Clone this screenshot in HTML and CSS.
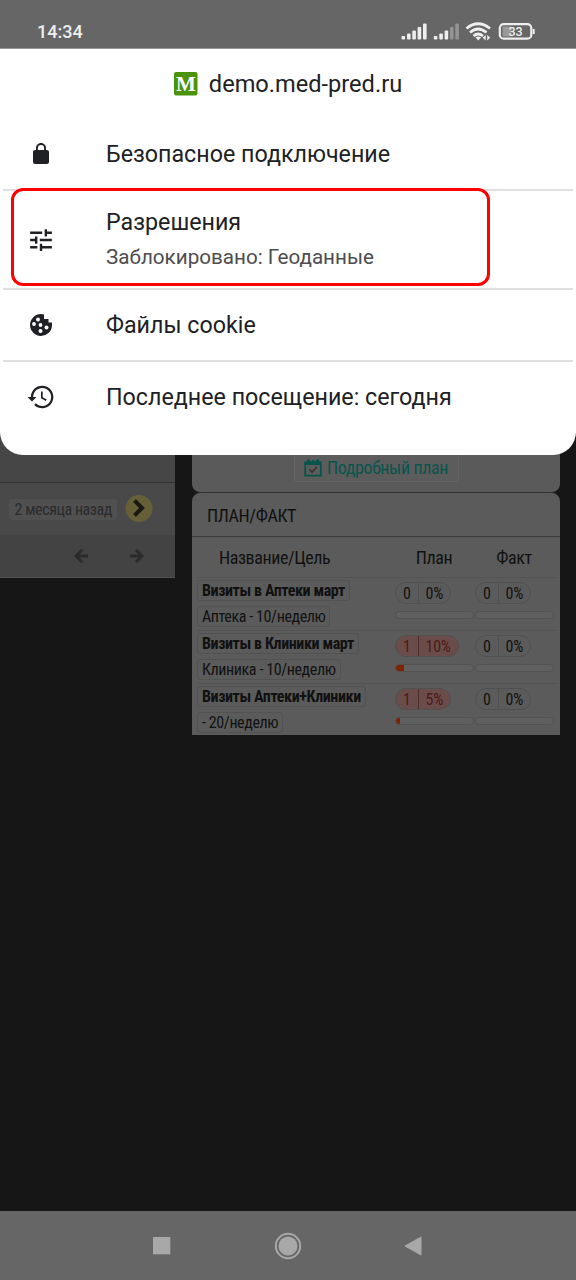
FILE: index.html
```html
<!DOCTYPE html>
<html lang="ru">
<head>
<meta charset="utf-8">
<title>demo.med-pred.ru</title>
<link rel="stylesheet" href="styles.css">
</head>
<body>
<div class="phone">
  <header class="status">
    <span class="clock">14:34</span>
    <svg class="signals" width="136" height="20" viewBox="0 0 136 20">
      <g fill="#eee">
        <rect x="1.5" y="15" width="3.6" height="3.5" rx="1"/><rect x="7" y="12.500" width="3.600" height="6" rx="1"/><rect x="12.300" y="9.500" width="3.600" height="9" rx="1"/><rect x="17.600" y="6" width="3.600" height="12.500" rx="1"/><rect x="23" y="2.500" width="3.600" height="16" rx="1"/>
        <rect x="33.800" y="15" width="3.600" height="3.500" rx="1"/><rect x="39.300" y="12.500" width="3.600" height="6" rx="1"/><rect x="44.600" y="9.500" width="3.600" height="9" rx="1"/>
      </g>
      <g fill="#949494"><rect x="50" y="6" width="3.600" height="12.500" rx="1"/><rect x="55.300" y="2.500" width="3.600" height="16" rx="1"/></g>
      <g fill="none" stroke="#eee" stroke-width="2.700"><path d="M66.500 7.500Q78 -2 90 7.500"/><path d="M70 11.500Q78 4.500 86.500 11.500"/><path d="M73.500 15Q78 11 83 15"/></g>
      <path d="M75.500 16.500L78.300 19.500L81 16.500Q78.300 14.500 75.500 16.500Z" fill="#eee"/>
      <path d="M85.700 14v5.500l-3-2.700M87.200 19.500v-5.500l3 2.700" fill="#eee"/>
      <rect x="99.800" y="3.200" width="31.500" height="14.500" rx="4" fill="none" stroke="#eee" stroke-width="2.200"/>
      <rect x="102.500" y="5.500" width="9" height="10" rx="1" fill="#999"/>
      <path d="M133.700 8v5" stroke="#eee" stroke-width="2"/>
      <text x="115.500" y="15" text-anchor="middle" class="battery">33</text>
    </svg>
  </header>

  <main class="page">
    <section class="aside">
      <div class="aside-top"></div>
      <div class="aside-row"><span class="ago">2 месяца назад</span>
        <svg class="next" width="28" height="28" viewBox="0 0 28 28"><circle cx="14" cy="13.500" r="13.500" fill="#666039"/><path d="M9.500 5.500L17 13L9.500 20.500" fill="none" stroke="#1b1a12" stroke-width="4"/></svg>
      </div>
      <div class="aside-nav">
        <svg width="14" height="14" viewBox="0 0 14 14"><path d="M8 1L2 7L8 13M2 7H14" /></svg>
        <svg width="14" height="14" viewBox="0 0 14 14"><path d="M6 1L12 7L6 13M12 7H0" /></svg>
      </div>
    </section>
    <section class="cards">
      <div class="card upper">
        <div class="plan-btn">
          <svg width="18" height="18" viewBox="0 0 18 18"><path d="M1.200 3.500H16.800V16.700H1.200Z" fill="none" stroke="#08554d" stroke-width="1.800"/><path d="M1 2.500H17V6H1ZM3 .5H6V4H3ZM12 .5H15V4H12ZM8 1H10V4H8Z" fill="#08554d"/><path d="M5.500 10.500L8 13L13 8" fill="none" stroke="#333" stroke-width="1.600"/></svg>
          <span>Подробный план</span>
        </div>
      </div>
      <div class="card fact">
        <h2>ПЛАН/ФАКТ</h2>
        <div class="head"><span class="c1">Название/Цель</span><span class="c2">План</span><span class="c3">Факт</span></div>
        <div class="row">
          <div class="names"><b>Визиты в Аптеки март</b><span>Аптека - 10/неделю</span></div>
          <div class="metric"><div class="pill"><i>0</i><i>0%</i></div><div class="bar"></div></div>
          <div class="metric"><div class="pill"><i>0</i><i>0%</i></div><div class="bar"></div></div>
        </div>
        <div class="row">
          <div class="names"><b>Визиты в Клиники март</b><span>Клиника - 10/неделю</span></div>
          <div class="metric"><div class="pill red"><i>1</i><i>10%</i></div><div class="bar"><div class="fill" style="width:10%"></div></div></div>
          <div class="metric"><div class="pill"><i>0</i><i>0%</i></div><div class="bar"></div></div>
        </div>
        <div class="row">
          <div class="names"><b>Визиты Аптеки+Клиники</b><span>- 20/неделю</span></div>
          <div class="metric"><div class="pill red"><i>1</i><i>5%</i></div><div class="bar"><div class="fill" style="width:5%"></div></div></div>
          <div class="metric"><div class="pill"><i>0</i><i>0%</i></div><div class="bar"></div></div>
        </div>
      </div>
    </section>

    <div class="sheet">
      <div class="site">
        <svg width="24" height="24" viewBox="0 0 24 24"><rect width="23.500" height="23.500" rx="2" fill="#4c930c"/><text x="11.800" y="18.500" text-anchor="middle" class="logo-letter">M</text></svg>
        <span>demo.med-pred.ru</span>
      </div>
      <div class="item secure">
        <svg width="24" height="24" viewBox="0 0 24 24"><path d="M18 8h-1V6c0-2.760-2.240-5-5-5S7 3.240 7 6v2H6c-1.100 0-2 .9-2 2v10c0 1.100.9 2 2 2h12c1.100 0 2-.9 2-2V10c0-1.100-.9-2-2-2zM8.900 8V6a3.100 3.100 0 0 1 6.200 0v2z"/></svg>
        <span>Безопасное подключение</span>
      </div>
      <div class="item perms">
        <svg width="29" height="29" viewBox="0 0 24 24"><path d="M3 17v2h6v-2H3zM3 5v2h10V5H3zm10 16v-2h8v-2h-8v-2h-2v6h2zM7 9v2H3v2h4v2h2V9H7zm14 4v-2H11v2h10zm-6-4h2V7h4V5h-4V3h-2v6z"/></svg>
        <div class="two"><span>Разрешения</span><small>Заблокировано: Геоданные</small></div>
        <div class="marker"></div>
      </div>
      <div class="item cookies">
        <svg width="24" height="24" viewBox="0 0 24 24"><path d="M12 1A11 11 0 1 0 23 12.500V9.500H19.500V6H15V1.500Z"/><g fill="#fff"><circle cx="9" cy="6.500" r="2"/><circle cx="5" cy="11" r="1.900"/><circle cx="11.500" cy="12" r="1.900"/><circle cx="17.500" cy="14.500" r="2"/><circle cx="11.500" cy="18" r="2"/></g></svg>
        <span>Файлы cookie</span>
      </div>
      <div class="item visit">
        <svg width="27" height="27" viewBox="0 0 24 24"><path d="M13 2a10 10 0 0 0-10 10H0l4 4 4-4H5a8 8 0 1 1 2.350 5.650L5.930 19.070A10 10 0 1 0 13 2zm-1 5v6l4.300 2.550.75-1.240-3.550-2.110V7z"/></svg>
        <span>Последнее посещение: сегодня</span>
      </div>
    </div>
  </main>

  <nav class="nav">
    <svg width="18" height="18"><rect width="17.300" height="17.300" fill="#a8a8a8"/></svg>
    <svg width="28" height="28"><circle cx="14" cy="14" r="12.200" fill="none" stroke="#a8a8a8" stroke-width="2"/><circle cx="14" cy="14" r="9.500" fill="#a8a8a8"/></svg>
    <svg width="18" height="20"><path d="M1 10L17 1V19Z" fill="#a8a8a8" stroke="#a8a8a8" stroke-linejoin="round"/></svg>
  </nav>
</div>
</body>
</html>
```
FILE: styles.css
```css
* { box-sizing: border-box; }
body { margin: 0; font-family: Roboto, sans-serif; background: #161616; }
svg { display: block; flex: none; }
.phone { width: 576px; height: 1280px; display: flex; flex-direction: column; overflow: hidden; }
.status { height: 48px; flex: none; background: #666; display: flex; justify-content: space-between; align-items: flex-start; padding: 21px 40px 0 37px; color: #eee; }
.clock { font-size: 18px; font-weight: 500; line-height: 22px; }
.battery { font-size: 12.500px; font-weight: 500; fill: #eee; }
.page { position: relative; flex: 1; display: flex; align-items: flex-start; background: #161616; font-family: "Roboto Condensed", Roboto, sans-serif; font-stretch: 75%; color: #111; }

.aside { width: 175px; height: 530px; margin-right: 17px; background: #434343; border-bottom: 1px solid #505050; }
.aside-top { height: 435px; border-bottom: 1px solid #333; background: #464646; }
.aside-row { height: 52px; background: #494949; display: flex; align-items: center; justify-content: flex-end; padding-right: 22px; gap: 8px; }
.ago { height: 21px; line-height: 21px; padding: 0 5px; font-size: 16px; letter-spacing: -.42px; color: #2b2b2b; background: #505050; border-radius: 3px; white-space: nowrap; }
.aside-nav { height: 41px; display: flex; justify-content: flex-end; align-items: center; gap: 42px; padding-right: 31px; }
.aside-nav path { fill: none; stroke: #2b2b2b; stroke-width: 3; }

.cards { width: 368px; }
.card { background: #5b5b5b; }
.upper { height: 444px; display: flex; flex-direction: column; justify-content: flex-end; align-items: center; padding-bottom: 10px; border-radius: 0 0 8px 8px; background: #5a5a5a; }
.plan-btn { width: 165px; height: 29px; display: flex; align-items: center; justify-content: center; gap: 5px; border: 1px solid #646464; border-radius: 3px; font-size: 18px; letter-spacing: -.4px; color: #08554d; background: #5c5c5c; white-space: nowrap; }
.fact { height: 243px; border-top: 1px solid #333; border-radius: 9px 9px 0 0; }
h2 { margin: 0; height: 44px; line-height: 45px; padding-left: 15px; font-size: 18px; letter-spacing: -.4px; font-weight: 400; border-bottom: 1px solid #3c3c3c; }
.head { height: 40px; display: grid; grid-template-columns: 202px 80px 80px; line-height: 41px; font-size: 18px; letter-spacing: -.42px; }
.c1 { padding-left: 27px; }
.c2 { text-align: center; }
.c3 { text-align: center; }
.row { height: 53px; margin: 0 2px 0 5px; padding-top: 2px; border-top: 1px solid #545454; display: flex; }
.names { width: 198px; flex: none; display: flex; flex-direction: column; align-items: flex-start; gap: 5px; }
.names b, .names span { height: 21px; line-height: 19px; padding: 0 4px; border: 1px solid #525252; border-radius: 3px; font-size: 16px; letter-spacing: -.4px; white-space: nowrap; }
.metric { width: 80px; flex: none; padding-top: 2px; }
.pill { height: 22px; width: max-content; display: flex; border: 1px solid #505050; border-radius: 11px; font-size: 16px; letter-spacing: -.3px; line-height: 21px; overflow: hidden; }
.pill i { font-style: normal; padding: 0 7px; }
.pill i + i { border-left: 1px solid #505050; }
.red { background: #6a4d4a; color: #501818; }
.red i + i { border-color: #4b2d2d; }
.bar { width: 79px; height: 8px; margin-top: 7px; background: #606060; border: 1px solid #525252; border-radius: 4px; overflow: hidden; }
.fill { height: 100%; background: #7a2404; }

.sheet { position: absolute; left: 0; top: 0; width: 576px; height: 407px; background: #fff; border-radius: 0 0 23px 23px; font-family: Roboto, sans-serif; font-stretch: 100%; color: #202124; font-size: 23.250px; border-top: 1px solid #999; }
.site { height: 70px; display: flex; align-items: center; justify-content: center; gap: 11px; font-size: 23.600px; padding-bottom: 1px; }
.logo-letter { font: 700 21px "Liberation Serif", serif; fill: #fff; }
.item { position: relative; display: flex; align-items: center; margin: 0 3px; padding-left: 103px; white-space: nowrap; border-bottom: 2px solid #e0e0e0; }
.item > svg { position: absolute; left: 38px; top: 50%; transform: translate(-50%, -50%); fill: #202124; }
.secure { height: 72px; }
.perms { height: 99px; }
.cookies { height: 72px; }
.visit { height: 70px; border: 0; }
.two { display: flex; flex-direction: column; padding-top: 3px; }
.two span { line-height: 32px; }
.two small { font-size: 20.650px; line-height: 38px; color: #4d4d50; }
.marker { position: absolute; left: 8px; top: -3px; width: 479px; height: 98px; border: 3px solid #f00; border-radius: 12px; }

.nav { height: 69px; flex: none; background: #666; display: flex; align-items: center; justify-content: space-between; padding: 0 154px 0 153px; }
```
